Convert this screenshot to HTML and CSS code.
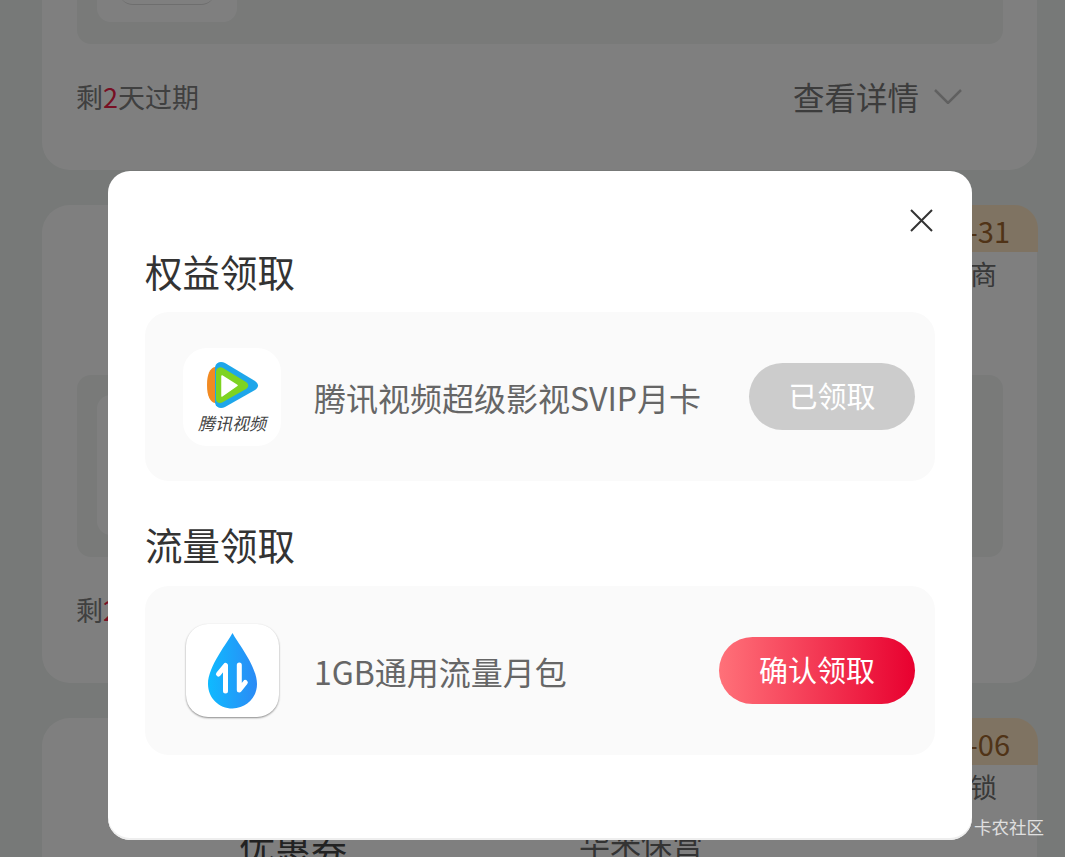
FILE: index.html
```html
<!DOCTYPE html>
<html lang="zh-CN">
<head>
    <meta charset="UTF-8">
    <meta name="viewport" content="width=device-width, initial-scale=1.0">
    <title>权益领取</title>

    <link rel="stylesheet" href="styles.css">
</head>
<body>

    <div class="list">
        <div class="card">
            <div class="head"></div>
            <div class="panel"><div class="item"><div class="item-inner"></div></div></div>
            <div class="foot">
                <span class="left">剩<b class="red">2</b>天过期</span>
                <span class="more">查看详情
                    <svg class="chev" width="28" height="15" viewBox="0 0 28 15"><path d="M1 1l13 13L27 1"/></svg>
                </span>
            </div>
        </div>

        <div class="card">
            <div class="head">
                <span class="tag">12-31</span>
                <div class="head-name">商</div>
            </div>
            <div class="panel"><div class="item"><div class="item-inner"></div></div></div>
            <div class="foot">
                <span class="left">剩<b class="red">2</b>天过期</span>
            </div>
        </div>

        <div class="card">
            <div class="head">
                <span class="tag">01-06</span>
                <div class="head-name">锁</div>
                <div class="head-row">
                    <span class="coupon">优惠券</span>
                    <span class="coupon-sub">华来保营</span>
                </div>
            </div>
        </div>
    </div>

    <div class="overlay">
        <div class="modal">
            <svg class="close" width="23" height="23" viewBox="0 0 23 23"><path d="M1 1l21 21M22 1L1 22"/></svg>

            <h2 class="title first">权益领取</h2>
            <div class="box">
                <div class="icon tx">
                    <svg width="52" height="50" viewBox="0 0 52 50">
                        <path fill="#f28a22" d="M8 6C3 7 0 13 0 24s3 17 8 18l5-2V8z"/>
                        <path fill="#1ea6ea" d="M8 6C9 1 14 0 18 2l30 18c4 3 4 6 0 9L18 46c-4 2-9 1-10-4z"/>
                        <path fill="#7ed321" d="M9 11c0-4 4-6 7-4l23 14c3 2 3 5 0 7L16 41c-3 2-7 1-7-3z"/>
                        <path fill="#fff" stroke="#fff" stroke-width="1.5" stroke-linejoin="round" d="M15 15l15 9.500L15 35z"/>
                    </svg>
                    <span class="tx-name">腾讯视频</span>
                </div>
                <span class="name">腾讯视频超级影视SVIP月卡</span>
                <span class="btn done">已领取</span>
            </div>

            <h2 class="title">流量领取</h2>
            <div class="box">
                <div class="icon drop">
                    <svg width="93" height="93" viewBox="0 0 93 93">
                        <defs>
                            <linearGradient id="dropfill" x1="0" y1="0" x2="1" y2="0">
                                <stop offset="0" stop-color="#0fbaff"/>
                                <stop offset="1" stop-color="#2b8af5"/>
                            </linearGradient>
                        </defs>
                        <path fill="url(#dropfill)" d="M46.500 9C42 18 22 42 22 60c0 14 11 24.500 24.500 24.500S71 74 71 60C71 42 51 18 46.500 9z"/>
                        <path fill="none" stroke="#fff" stroke-width="5" stroke-linecap="round" stroke-linejoin="round" d="M32.500 50l7-8.500V67M53.300 41v25l6-7.500"/>
                    </svg>
                </div>
                <span class="name">1GB通用流量月包</span>
                <span class="btn get">确认领取</span>
            </div>
        </div>
    </div>

    <span class="mark">卡农社区</span>

</body>
</html>
```

FILE: styles.css
```css
html, body{
    margin: 0;
    height: 100%;
}
body{
    position: relative;
    height: 857px;
    overflow: hidden;
    background-color: #eef3f0;
    font-family: "Noto Sans CJK SC", "Noto Sans", sans-serif;
}

.list{
    height: 1165px;
    margin-top: -308px;
    padding-left: 42px;
    overflow: hidden;
}
.card{
    width: 995px;
    height: 478px;
    margin-bottom: 35px;
    box-sizing: border-box;
    padding: 0 35px;
    background-color: #fff;
    border-radius: 28px;
}
.head{
    position: relative;
    height: 170px;
    box-sizing: border-box;
    padding-top: 50px;
}
.tag{
    position: absolute;
    top: 0;
    right: -36px;
    height: 47px;
    padding: 0 28px 0 20px;
    background-color: #ffe6c4;
    border-radius: 0 24px 0 0;
    color: #a0662e;
    font-size: 29px;
    line-height: 50px;
}
.head-name{
    padding-right: 5px;
    text-align: right;
    color: #707070;
    font-size: 27px;
    line-height: 38px;
}
.head-row{
    display: flex;
    margin-top: 16px;
    padding-left: 162px;
}
.coupon{
    width: 108px;
    color: #444;
    font-size: 36px;
    line-height: 48px;
}
.coupon-sub{
    margin-left: 232px;
    color: #666;
    font-size: 31px;
    line-height: 38px;
}
.panel{
    width: 926px;
    height: 182px;
    box-sizing: border-box;
    padding: 20px;
    background-color: #f2f5f3;
    border-radius: 14px;
}
.item{
    width: 140px;
    height: 140px;
    box-sizing: border-box;
    padding: 0 22px;
    background-color: #fff;
    border-radius: 14px;
}
.item-inner{
    height: 122px;
    border-bottom: 1px solid #ddd;
    border-radius: 0 0 14px 14px;
}
.foot{
    display: flex;
    align-items: center;
    justify-content: space-between;
    height: 104px;
    padding-right: 40px;
    box-sizing: border-box;
}
.left{
    margin-left: -1px;
    color: #808080;
    font-size: 27px;
}
.red{
    font-weight: normal;
    color: #f02048;
}
.more{
    display: flex;
    align-items: center;
    gap: 15px;
    color: #787878;
    font-size: 31.500px;
}
.chev{
    fill: none;
    stroke: #c0c0c0;
    stroke-width: 2.500;
}

.overlay{
    position: absolute;
    top: 0;
    left: 0;
    right: 0;
    bottom: 0;
    padding: 171px 0 0 108px;
    background-color: rgba(0, 0, 0, 0.5);
}
.modal{
    position: relative;
    width: 864px;
    height: 669px;
    box-sizing: border-box;
    padding: 75px 37px 0;
    background-color: #fff;
    border-radius: 22px;
    box-shadow: inset 0 -2px 0 #eee;
}
.close{
    position: absolute;
    top: 38px;
    right: 39px;
    fill: none;
    stroke: #333;
    stroke-width: 2;
}
.title{
    margin: 38px 0 17px;
    color: #333;
    font-size: 37.500px;
    font-weight: normal;
    line-height: 50px;
}
.title.first{
    margin: 0 0 16px;
}
.box{
    display: flex;
    align-items: center;
    height: 169px;
    box-sizing: border-box;
    padding: 0 20px 0 38px;
    background-color: #fafafa;
    border-radius: 24px;
}
.icon{
    flex: none;
    background-color: #fff;
}
.tx{
    display: flex;
    flex-direction: column;
    align-items: center;
    width: 98px;
    height: 98px;
    box-sizing: border-box;
    padding-top: 13px;
    margin-right: 33px;
    border-radius: 24px;
}
.tx svg{
    margin-left: 2px;
}
.tx-name{
    color: #444;
    font-size: 17px;
    font-style: italic;
    line-height: 24px;
}
.drop{
    width: 93px;
    height: 93px;
    margin: 0 35px 0 3px;
    border-radius: 22px;
    box-shadow: 0 1px 2px rgba(0, 0, 0, 0.45);
}
.drop svg{
    display: block;
}
.name{
    color: #666;
    font-size: 32px;
}
.btn{
    margin-left: auto;
    height: 67px;
    border-radius: 34px;
    color: #fff;
    font-size: 29px;
    line-height: 65px;
    text-align: center;
}
.done{
    width: 166px;
    background-color: #ccc;
}
.get{
    width: 196px;
    background-image: linear-gradient(to right, #ff7179, #e8002f);
}

.mark{
    position: absolute;
    right: 21px;
    top: 815px;
    color: #e0e0e0;
    font-size: 17.500px;
    line-height: 24px;
}
```
